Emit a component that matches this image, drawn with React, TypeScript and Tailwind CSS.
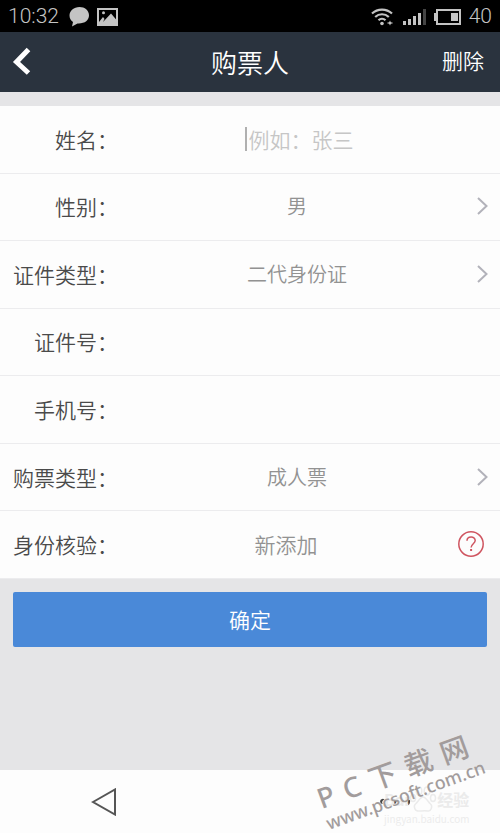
import React from 'react';

interface RowProps {
  id: string;
  label: string;
  children?: React.ReactNode;
}

const Row: React.FC<RowProps> = ({ id, label, children }) => (
  <div className="flex items-center border-b border-[#ececee] pb-px">
    <label htmlFor={id} className="w-[118px] shrink-0 text-right text-[21px] leading-8 text-[#4a4a4a]">
      {label}：
    </label>
    {children}
  </div>
);

interface PickerProps {
  id: string;
  value: string;
}

const Picker: React.FC<PickerProps> = ({ id, value }) => (
  <button id={id} type="button" className="flex min-w-0 flex-1 items-center pr-3 text-xl leading-8 text-[#929292]">
    <span className="flex-1">{value}</span>
    <svg className="h-[18px] w-3" viewBox="0 0 12 18" fill="none" stroke="#b2b2ba" strokeWidth="2">
      <path d="M2 1l8.500 8L2 17" />
    </svg>
  </button>
);

const StatusBar: React.FC = () => (
  <div className="flex h-8 items-center justify-between bg-black px-2 pt-px font-['Roboto'] text-[21px] font-light text-[#c4c4c4]">
    <div className="flex items-center gap-2">
      <span>10:32</span>
      <svg className="ml-0.5 h-5 w-5" viewBox="0 0 20 20" fill="currentColor">
        <path d="M10.500 0C4.800 0 .5 3.600 .5 8.600c0 2.800 1.300 5 3.500 6.400L3 19.500 8.500 16.500C15.500 17 20 13.300 20 8.300 20 3.500 15.800 0 10.500 0z" />
      </svg>
      <svg className="h-[18px] w-[21px]" viewBox="0 0 21 18">
        <path d="M1 1h19v16H1z" fill="none" stroke="currentColor" strokeWidth="2" />
        <circle cx="6.500" cy="4.800" r="1.500" fill="currentColor" />
        <path d="M2 14l4-5 1.500 2L6 14l8-8.500 6 7V17H2z" fill="currentColor" />
      </svg>
    </div>
    <div className="flex items-center gap-2">
      <svg className="mr-0.5 h-[18px] w-[22px]" viewBox="0 0 22 18" fill="none" stroke="currentColor" strokeWidth="2.200">
        <path d="M1 5.500C6.500 0.200 15.500 0.200 21 5.500M4.200 9C8 5.300 14 5.300 17.800 9M7.500 12.300C9.500 10.400 12.500 10.400 14.500 12.300" />
        <circle cx="11" cy="15.500" r="1.800" fill="currentColor" stroke="none" />
        <path d="M19 12.500l1.200 2.500-1.200 2.500-1.200-2.500z" fill="currentColor" stroke="none" />
        <path d="M16.500 15h5" strokeWidth="1.200" />
      </svg>
      <svg className="h-4 w-[23px]" viewBox="0 0 23 16" fill="currentColor">
        <path d="M0 12h3v4H0zM5 10h3v6H5zM10 7h3v9h-3zM15 4h3v12h-3z" />
        <path d="M20 0h3v16h-3z" opacity=".35" />
      </svg>
      <svg className="h-4 w-[27px]" viewBox="0 0 27 16">
        <path d="M3 1h23v14H3z" fill="none" stroke="currentColor" strokeWidth="2" />
        <path d="M0 4h3v8H0zM17 4h7v8h-7z" fill="currentColor" />
      </svg>
      <span>40</span>
    </div>
  </div>
);

const App: React.FC = () => {
  return (
    <div className="relative flex min-h-screen flex-col overflow-hidden bg-[#e5e5e7] font-['Noto_Sans_CJK_SC',sans-serif] font-[350]">
      <StatusBar />

      <header className="grid h-[60px] grid-cols-3 items-center bg-[#2a333e] px-3 pb-0.5 text-white">
        <button type="button" aria-label="返回" className="justify-self-start">
          <svg className="h-7 w-5" viewBox="0 0 20 28" fill="none" stroke="currentColor" strokeWidth="5">
            <path d="M16.500 2.500L4.500 15l12 11" />
          </svg>
        </button>
        <h1 className="text-center text-[26px]">购票人</h1>
        <button type="button" className="justify-self-end pr-1 text-[21px]">删除</button>
      </header>

      <form className="mt-[14px]">
        <div className="grid h-[473px] auto-rows-fr bg-[#fdfdfd]">
          <Row id="name" label="姓名">
            <div className="relative flex-1 pr-4">
              <input
                id="name"
                type="text"
                placeholder="例如：张三"
                className="w-full bg-transparent text-center text-[21px] leading-8 outline-none placeholder:text-[#c6c6c6]"
              />
              {/* text cursor */}
              <span className="absolute left-[127px] top-1 h-6 w-0.5 bg-[#b0b0b0]" />
            </div>
          </Row>
          <Row id="gender" label="性别">
            <Picker id="gender" value="男" />
          </Row>
          <Row id="idType" label="证件类型">
            <Picker id="idType" value="二代身份证" />
          </Row>
          <Row id="idNumber" label="证件号">
            <input id="idNumber" type="text" className="min-w-0 flex-1 bg-transparent text-center text-[21px] outline-none" />
          </Row>
          <Row id="phone" label="手机号">
            <input id="phone" type="tel" className="min-w-0 flex-1 bg-transparent text-center text-[21px] outline-none" />
          </Row>
          <Row id="ticketType" label="购票类型">
            <Picker id="ticketType" value="成人票" />
          </Row>
          <Row id="verify" label="身份核验">
            <output id="verify" className="flex-1 text-center text-[21px] leading-8 text-[#929292]">新添加</output>
            <button type="button" aria-label="帮助" className="mr-4 pl-1">
              <svg className="h-[26px] w-[26px]" viewBox="0 0 26 26" fill="none" stroke="#cf5560" strokeWidth="1.500">
                <circle cx="13" cy="13" r="12.200" />
                <path d="M9 9.800C9 4.800 17.200 4.800 17.200 9.600c0 3-4.100 3.400-4.100 7" />
                <path d="M13.100 18v2" strokeWidth="2" />
              </svg>
            </button>
          </Row>
        </div>
        <div className="px-[13px] pt-[13px]">
          <button type="submit" className="h-[55px] w-full rounded-xs bg-[#4a89d8] text-[21px] text-white">确定</button>
        </div>
      </form>

      <nav className="relative mt-auto flex h-[63px] items-center bg-[#fdfdfd] px-[91px]">
        <button type="button" aria-label="后退">
          <svg className="h-7 w-[26px]" viewBox="0 0 26 28" fill="none" stroke="#555" strokeWidth="2">
            <path d="M2 14L24 1.500v25z" />
          </svg>
        </button>
        <button type="button" aria-label="更多" className="absolute left-[379px] top-[28px]">
          <svg className="h-2 w-8" viewBox="0 0 32 8" fill="#444">
            <path d="M5.500 1.500A2.600 2.600 0 1 0 4 6C2.500 5 3 2.500 5.500 1.500z" />
            <circle cx="16" cy="4" r="1.800" />
            <path d="M28 2.500a1.600 1.600 0 0 1 3 1.500c0 1.500-.8 2.600-1.800 3.200V5.500A1.600 1.600 0 0 1 28 2.500z" />
          </svg>
        </button>
      </nav>

      <div className="pointer-events-none absolute right-[26px] bottom-[8px] flex w-[90px] flex-col text-[#ebebeb]">
        <span className="flex items-center text-[16px] leading-5 font-bold">
          Bai
          <svg className="h-7 w-7 shrink-0" viewBox="0 0 28 28" fill="none" stroke="currentColor" strokeWidth="1.500">
            <ellipse cx="4" cy="13" rx="2.500" ry="3.500" />
            <ellipse cx="10" cy="6" rx="2.800" ry="4" />
            <ellipse cx="18" cy="6" rx="2.800" ry="4" />
            <ellipse cx="24" cy="13" rx="2.500" ry="3.500" />
            <path d="M14 12c-3 0-5 5-7.500 7S6 26 9 26s7-.5 10 0 5-5 2.500-7S17 12 14 12z" />
          </svg>
          经验
        </span>
        <span className="text-[10px] leading-3">jingyan.baidu.com</span>
      </div>

      <div className="pointer-events-none absolute right-[12px] bottom-[28px] flex w-[172px] -rotate-20 flex-col font-['Noto_Sans','Noto_Sans_CJK_SC',sans-serif] font-medium text-[#a29c9c]">
        <span className="flex gap-[10px] text-[28px] leading-8">
          <span>P</span>
          <span>C</span>
          <span>下</span>
          <span>载</span>
          <span>网</span>
        </span>
        <span className="text-[18px] leading-5">www.pcsoft.com.cn</span>
      </div>
    </div>
  );
};

export default App;
